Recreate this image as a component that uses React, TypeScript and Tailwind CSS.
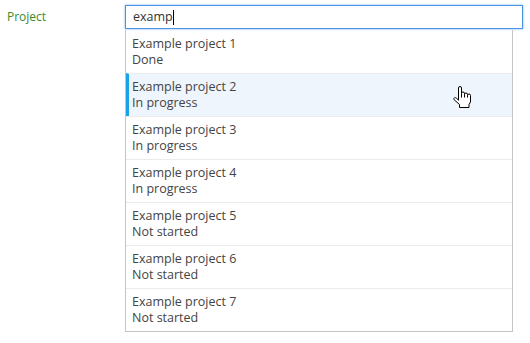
import React from 'react';

const projects = [
  { name: 'Example project 1', status: 'Done' },
  { name: 'Example project 2', status: 'In progress' },
  { name: 'Example project 3', status: 'In progress' },
  { name: 'Example project 4', status: 'In progress' },
  { name: 'Example project 5', status: 'Not started' },
  { name: 'Example project 6', status: 'Not started' },
  { name: 'Example project 7', status: 'Not started' },
];

function HandCursor() {
  return (
    <svg width="19" height="23" viewBox="0 0 19 23" className="absolute left-[453px] top-[86px]">
      <path
        d="M5.5 2 Q5.5 0.5 7 0.5 Q8.5 0.5 8.5 2 L8.5 7.5 Q8.5 6 10 6 Q11.5 6 11.5 7.5 L11.5 8.5 Q11.5 7 13 7 Q14.5 7 14.5 8.5 L14.5 9.5 Q14.5 8 16 8 Q17.5 8 17.5 9.5 L17.5 16 L16 18.5 L16 21.5 L6.5 21.5 L6.5 18.5 L1.2 13.8 Q0.2 12.4 1.6 11.7 Q2.7 11.3 3.8 12.5 L5.5 14.2 Z"
        fill="#fff"
        stroke="#000"
        strokeWidth="1"
        strokeLinejoin="round"
      />
      <path d="M8.5 7.5 L8.5 11.5 M11.5 8.5 L11.5 11.5 M14.5 9.5 L14.5 11.5" stroke="#000" strokeWidth="1" />
    </svg>
  );
}

export default function App() {
  return (
    <div className="relative w-[530px] h-[343px] bg-white" style={{ fontFamily: '"Open Sans", "Noto Sans", sans-serif' }}>
      <div className="flex pt-[5px]">
        <div className="w-[125px] pl-[7px] pt-[3px] text-[12px] text-[#3a8a2a]">Project</div>
        <div className="flex flex-col">
          <div className="w-[398px] h-[24px] border border-[#4d94e6] shadow-[0_0_2px_#6aa8f0] flex items-center px-[7px] text-[12.5px] text-[#333]">
            examp<span className="w-px h-[15px] bg-black" />
          </div>
          <div className="w-[388px] border-x border-b border-[#c4c4c4] mt-px">
            {projects.map((p, i) => (
              <div
                key={p.name}
                className={`h-[43px] flex flex-col justify-center text-[12.5px] leading-[16px] text-[#444] ${
                  i > 0 ? 'border-t border-[#ebebeb]' : ''
                } ${i === 1 ? 'bg-[#eef5fc] border-l-[3px] border-l-[#1aa1e8] pl-[3px]' : 'pl-[6px]'}`}
              >
                <div>{p.name}</div>
                <div>{p.status}</div>
              </div>
            ))}
          </div>
        </div>
      </div>
      <HandCursor />
    </div>
  );
}
